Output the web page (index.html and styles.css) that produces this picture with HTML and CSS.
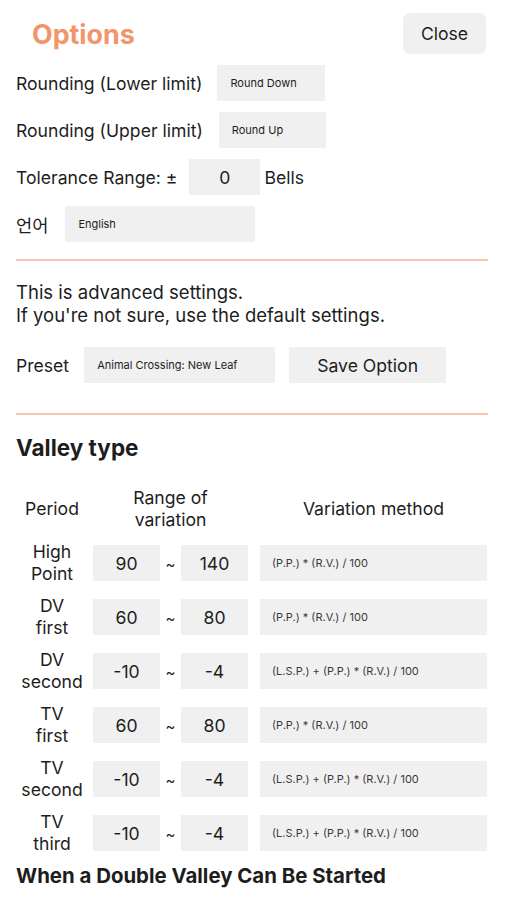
FILE: index.html
```html
<!DOCTYPE html>
<html>
<head>
<meta charset="utf-8">
<link rel="stylesheet" href="styles.css">
</head>
<body>
<div class="page">
  <header class="top">
    <h1 class="title">Options</h1>
    <button class="btn close">Close</button>
  </header>

  <div class="form-row">
    <span class="label">Rounding (Lower limit)</span>
    <div class="box small w-round1">Round Down</div>
  </div>
  <div class="form-row">
    <span class="label">Rounding (Upper limit)</span>
    <div class="box small w-round2">Round Up</div>
  </div>
  <div class="form-row">
    <span class="label">Tolerance Range: ±</span>
    <div class="box num w-tol">0</div>
    <span class="label unit">Bells</span>
  </div>
  <div class="form-row">
    <span class="label lang">언어</span>
    <div class="box small w-lang">English</div>
  </div>

  <hr class="divider first">

  <p class="note">This is advanced settings.<br>If you're not sure, use the default settings.</p>

  <div class="form-row preset">
    <span class="label">Preset</span>
    <div class="box small w-preset">Animal Crossing: New Leaf</div>
    <button class="btn save">Save Option</button>
  </div>

  <hr class="divider second">

  <h2 class="section">Valley type</h2>

  <div class="table">
    <div class="th period">Period</div>
    <div class="th range">Range of<br>variation</div>
    <div class="th method">Variation method</div>

    <div class="period">High<br>Point</div>
    <div class="box num">90</div><div class="tilde">~</div><div class="box num">140</div>
    <div class="box formula">(P.P.) * (R.V.) / 100</div>

    <div class="period">DV<br>first</div>
    <div class="box num">60</div><div class="tilde">~</div><div class="box num">80</div>
    <div class="box formula">(P.P.) * (R.V.) / 100</div>

    <div class="period">DV<br>second</div>
    <div class="box num">-10</div><div class="tilde">~</div><div class="box num">-4</div>
    <div class="box formula">(L.S.P.) + (P.P.) * (R.V.) / 100</div>

    <div class="period">TV<br>first</div>
    <div class="box num">60</div><div class="tilde">~</div><div class="box num">80</div>
    <div class="box formula">(P.P.) * (R.V.) / 100</div>

    <div class="period">TV<br>second</div>
    <div class="box num">-10</div><div class="tilde">~</div><div class="box num">-4</div>
    <div class="box formula">(L.S.P.) + (P.P.) * (R.V.) / 100</div>

    <div class="period">TV<br>third</div>
    <div class="box num">-10</div><div class="tilde">~</div><div class="box num">-4</div>
    <div class="box formula">(L.S.P.) + (P.P.) * (R.V.) / 100</div>
  </div>

  <h3 class="subsection">When a Double Valley Can Be Started</h3>
</div>
</body>
</html>
```

FILE: styles.css
```css
* { box-sizing: border-box; }
html, body { margin: 0; padding: 0; background: #fff; }
body {
  font-family: Inter, "Noto Sans CJK KR", "Liberation Sans", sans-serif;
  color: #1d1d1d;
  font-size: 17.6px;
}
.page { padding: 13px 20px 0 16px; }

.top {
  display: flex;
  justify-content: space-between;
  align-items: center;
  height: 41px;
  margin-bottom: 11px;
}
.title {
  margin: 0 0 0 16px;
  font-size: 26.8px;
  font-weight: 700;
  color: #f1956b;
}
.btn {
  font-family: inherit;
  font-size: 17.6px;
  color: #1d1d1d;
  background: #f0f0f0;
  border: none;
  border-radius: 7px;
  padding: 0;
}
.close { width: 83px; height: 41px; margin-right: 1px; }

.form-row {
  display: flex;
  align-items: center;
  height: 36px;
  margin-bottom: 11px;
}
.label { margin-right: 15px; white-space: nowrap; }
.label.unit { margin-left: 4px; margin-right: 0; }
.label.lang { margin-right: 17px; }

.box {
  background: #f0f0f0;
  height: 36px;
  display: flex;
  align-items: center;
}
.box.small { font-size: 11px; padding-left: 13px; }
.box.num { justify-content: center; font-size: 17.6px; }
.w-round1 { width: 108px; }
.w-round2 { width: 107px; margin-left: 1px; }
.w-tol { width: 71px; margin-left: -3px; }
.w-lang { width: 190px; }
.w-preset { width: 191px; padding-left: 12px; }

.divider {
  border: none;
  height: 2px;
  background: #f7c6ad;
  margin: 0 -1px 0 0;
}
.divider.first { margin-top: 17px; }
.note {
  margin: 20px 0 20px 0;
  line-height: 23px;
  font-size: 18.5px;
}
.form-row.preset { margin-bottom: 30px; }
.preset .label { margin-right: 15px; }
.save { width: 157px; height: 36px; margin-left: 14px; border-radius: 0; }

.section {
  margin: 20px 0 0 0;
  font-size: 22.5px;
  font-weight: 700;
  line-height: 26px;
}

.table {
  display: grid;
  grid-template-columns: 77px 67px 21px 67px 1fr;
  row-gap: 10px;
  align-items: center;
  margin-top: 26px;
}
.th { text-align: center; line-height: 22px; }
.th.range { grid-column: 2 / 5; }
.th.method { margin-left: 12px; }
.table .th { margin-bottom: 0; }
.period {
  text-align: center;
  line-height: 22px;
  padding-right: 5px;
}
.tilde { text-align: center; font-size: 15px; padding-top: 3px; }
.formula {
  margin-left: 12px;
  font-size: 11px;
  padding-left: 12px;
  color: #3a3a3a;
}

.subsection {
  margin: 9px 0 0 0;
  font-size: 20.4px;
  font-weight: 700;
  line-height: 24px;
}
```
